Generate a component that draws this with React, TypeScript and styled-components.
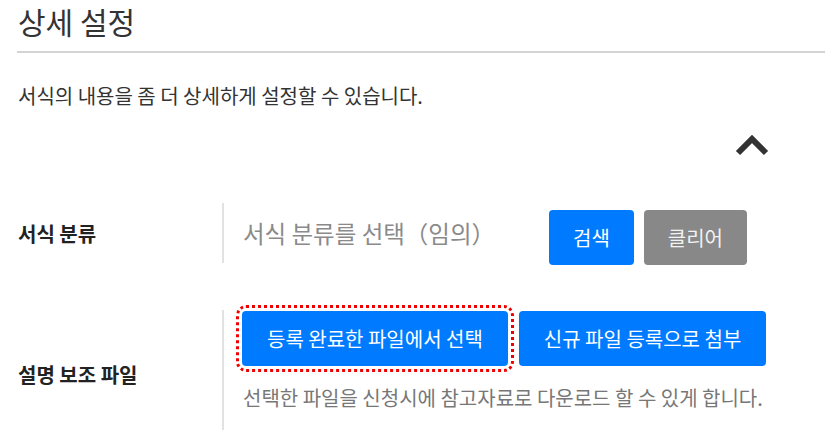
import React from "react";
import styled, { createGlobalStyle } from "styled-components";

const GlobalStyle = createGlobalStyle`
  html, body {
    margin: 0;
    padding: 0;
    background: #fff;
    overflow: hidden;
  }
  body {
    font-family: "Noto Sans CJK KR", "Noto Sans", sans-serif;
    color: #333;
  }
  * {
    box-sizing: border-box;
  }
`;

const App: React.FC = () => {
  return (
    <>
      <GlobalStyle />
      <Page>
        <Title>상세 설정</Title>
        <Description>서식의 내용을 좀 더 상세하게 설정할 수 있습니다.</Description>
        <ToggleRow>
          <Chevron viewBox="0 0 36 24" aria-label="접기">
            <polyline points="4,20 18,6 32,20" />
          </Chevron>
        </ToggleRow>

        <FieldRow $height={60} $gap={46}>
          <Label>서식 분류</Label>
          <Field $inline>
            <Placeholder>서식 분류를 선택（임의）</Placeholder>
            <Button $nudge>검색</Button>
            <Button $nudge $variant="gray">
              클리어
            </Button>
          </Field>
        </FieldRow>

        <FieldRow $height={128} $gap={47}>
          <Label>설명 보조 파일</Label>
          <Field>
            <ButtonGroup>
              <Button $focused>등록 완료한 파일에서 선택</Button>
              <Button>신규 파일 등록으로 첨부</Button>
            </ButtonGroup>
            <Help>선택한 파일을 신청시에 참고자료로 다운로드 할 수 있게 합니다.</Help>
          </Field>
        </FieldRow>
      </Page>
    </>
  );
};

export default App;

const Page = styled.div`
  padding-left: 17px;
  width: 860px;
`;

const Title = styled.h2`
  margin: 0;
  padding: 0 0 9px 1px;
  font-size: 30px;
  font-weight: 400;
  line-height: 42px;
  color: #333;
  border-bottom: 2px solid #d4d4d4;
`;

const Description = styled.p`
  margin: 29px 0 0 1px;
  font-size: 20px;
  line-height: 28px;
  color: #333;
`;

const ToggleRow = styled.div`
  display: flex;
  padding-left: 717px;
  margin-top: 23px;
  height: 24px;
`;

const Chevron = styled.svg`
  width: 36px;
  height: 24px;
  fill: none;
  stroke: #333;
  stroke-width: 6;
`;

const FieldRow = styled.div<{ $height: number; $gap: number }>`
  display: flex;
  align-items: center;
  margin-top: ${({ $gap }) => $gap}px;
  height: ${({ $height }) => $height}px;
`;

const Label = styled.div`
  width: 205px;
  padding-left: 1px;
  font-size: 20px;
  font-weight: 700;
  color: #222;
`;

const Field = styled.div<{ $inline?: boolean }>`
  align-self: stretch;
  border-left: 2px solid #e2e2e2;
  padding-left: 18px;
  display: flex;
  flex-direction: ${({ $inline }) => ($inline ? "row" : "column")};
  align-items: ${({ $inline }) => ($inline ? "center" : "flex-start")};
`;

const Placeholder = styled.span`
  font-size: 23.5px;
  color: #8a8a8a;
  width: 307px;
  padding-left: 1px;
`;

const ButtonGroup = styled.div`
  display: flex;
  gap: 11px;
  margin-top: 1px;
`;

const Button = styled.button<{
  $variant?: "gray";
  $focused?: boolean;
  $nudge?: boolean;
}>`
  font-family: inherit;
  font-size: 20px;
  color: ${({ $variant }) => ($variant === "gray" ? "#f2f2f2" : "#fff")};
  height: 55px;
  padding: 0 ${({ $nudge }) => ($nudge ? "24px" : "25px")};
  border: none;
  border-radius: 4px;
  background: ${({ $variant }) => ($variant === "gray" ? "#888888" : "#007bff")};
  margin-top: ${({ $nudge }) => ($nudge ? "8px" : "0")};
  margin-right: ${({ $nudge }) => ($nudge ? "10px" : "0")};
  cursor: pointer;
  outline: ${({ $focused }) => ($focused ? "3px dotted #e00" : "none")};
  outline-offset: 3px;
`;

const Help = styled.p`
  margin: 18px 0 0 1px;
  font-size: 20px;
  line-height: 28px;
  color: #777;
`;
